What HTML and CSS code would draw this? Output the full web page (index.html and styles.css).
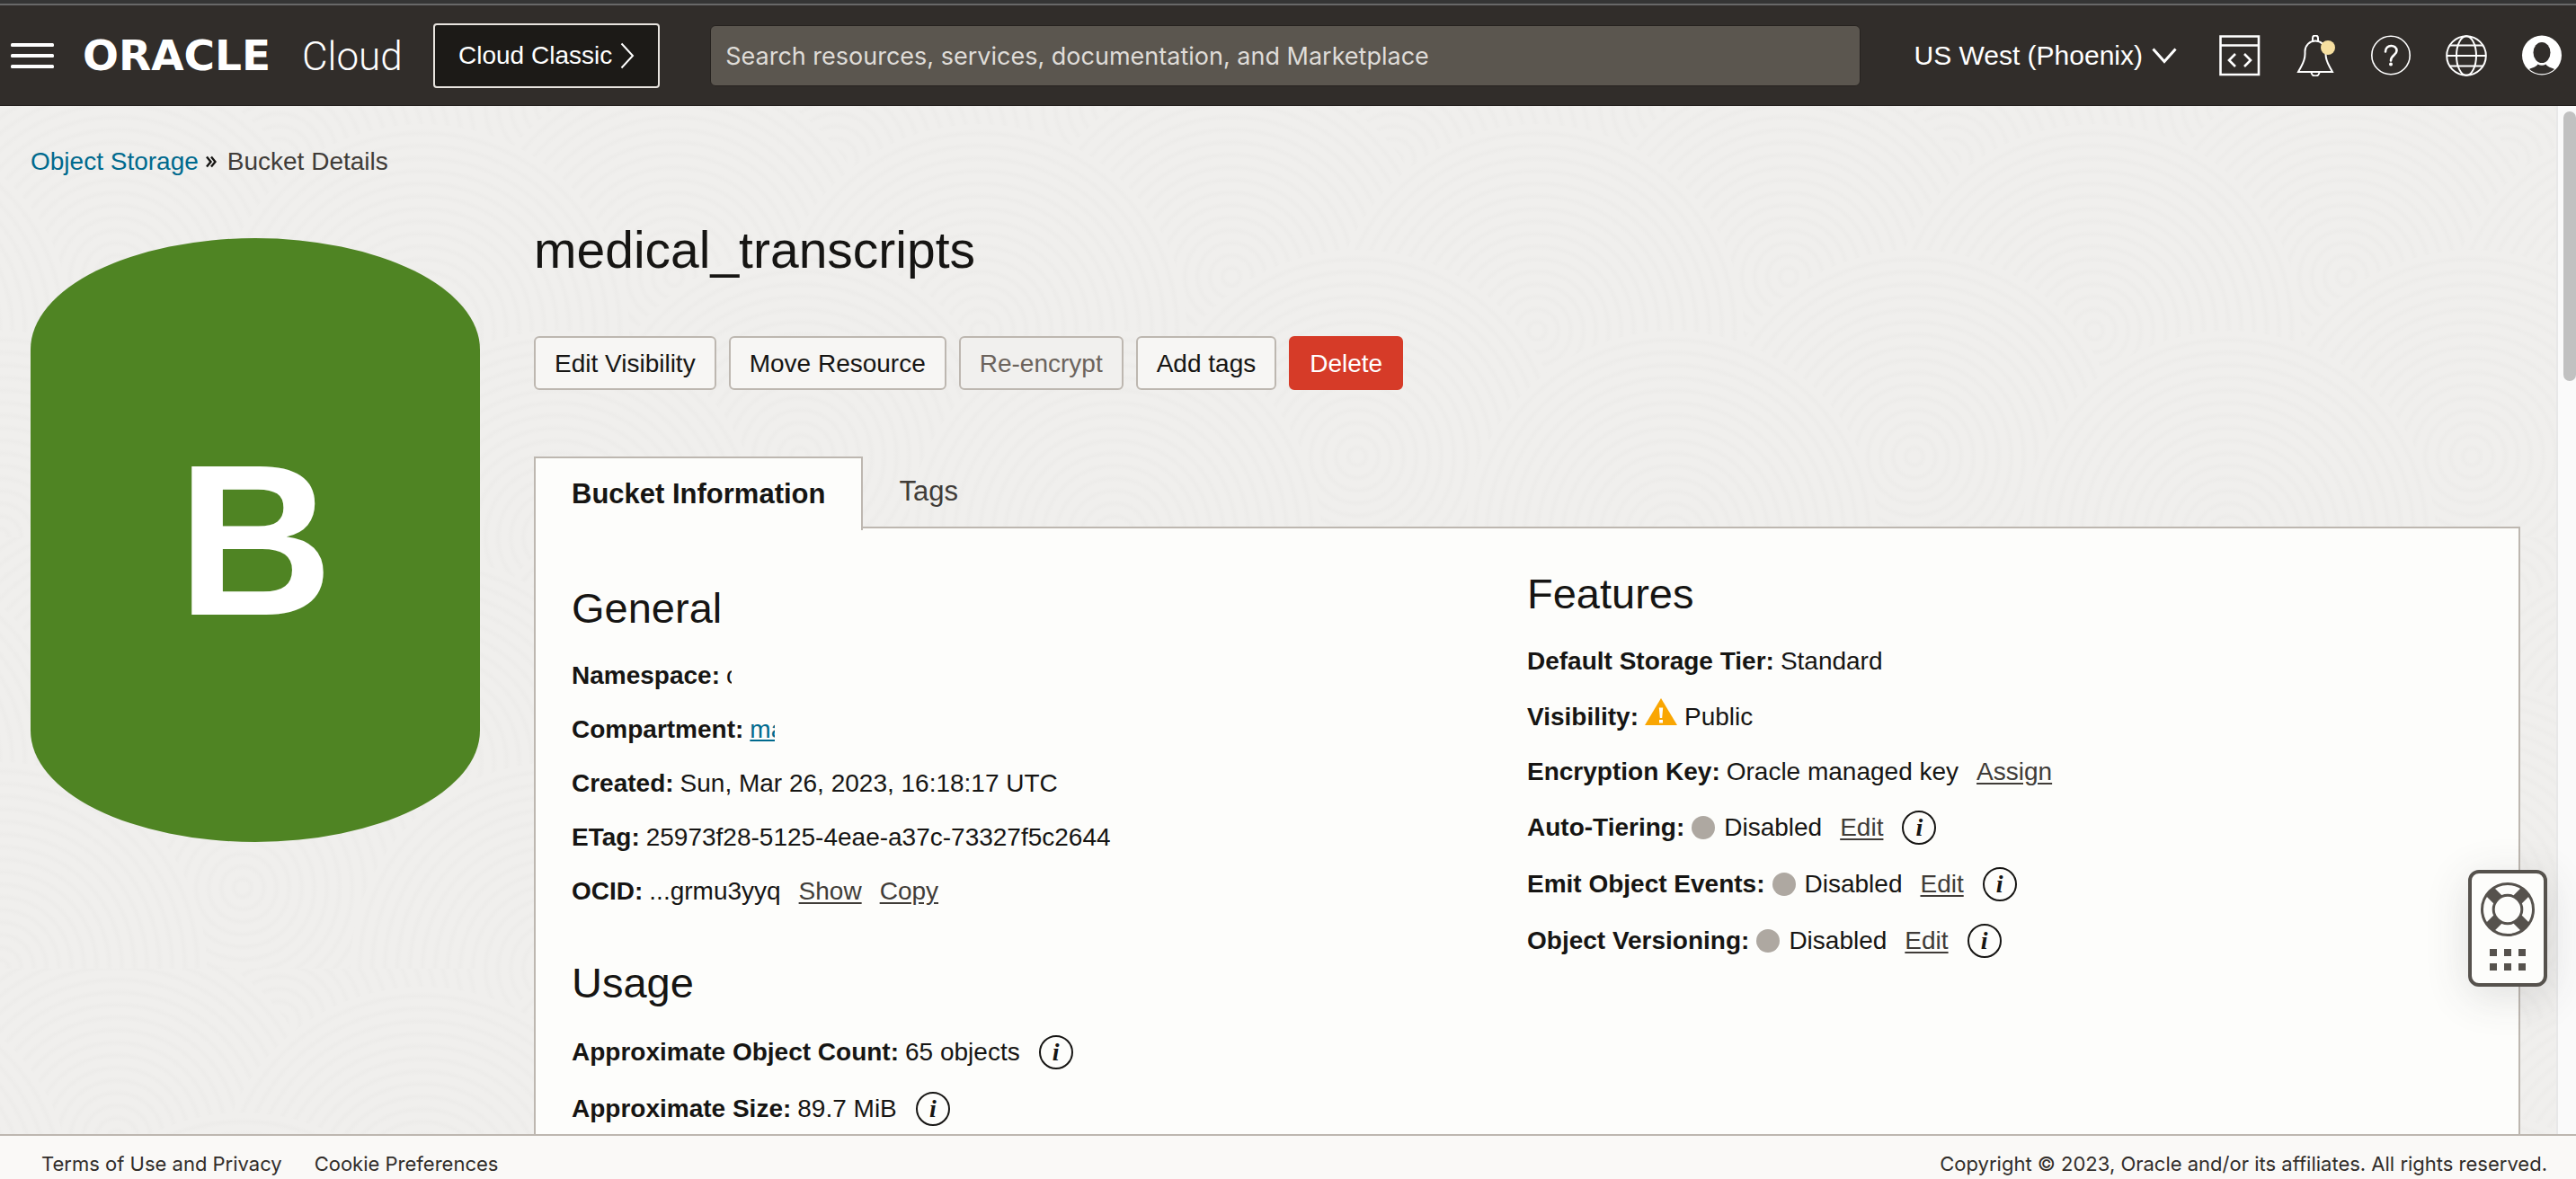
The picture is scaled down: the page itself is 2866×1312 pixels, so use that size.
FILE: index.html
```html
<!DOCTYPE html>
<html lang="en">
<head>
<meta charset="utf-8">
<meta name="viewport" content="width=device-width, initial-scale=1">
<title>Bucket Details | Oracle Cloud</title>
<link rel="stylesheet" href="styles.css">
</head>
<body>
<header class="topbar">
  <button class="icon-btn menu-btn" type="button" aria-label="Open navigation menu">
    <svg width="48" height="28" viewBox="0 0 48 28" fill="#fff"><rect width="48" height="4" rx="1.5"/><rect y="12" width="48" height="4" rx="1.5"/><rect y="24" width="48" height="4" rx="1.5"/></svg>
  </button>
  <a class="brand" href="#"><span class="brand-name">ORACLE</span><span class="brand-product">Cloud</span></a>
  <button class="classic-btn" type="button">Cloud Classic
    <svg width="16" height="30" viewBox="0 0 16 30" fill="none" stroke="#fff" stroke-width="2"><path d="M1.500 1.500 14 15 1.500 28.500"/></svg>
  </button>
  <input class="search" type="text" aria-label="Search" placeholder="Search resources, services, documentation, and Marketplace">
  <button class="region-btn" type="button">US West (Phoenix)
    <svg width="28" height="18" viewBox="0 0 28 18" fill="none" stroke="#fff" stroke-width="3"><path d="M1.500 1.500 14 15.500 26.500 1.500"/></svg>
  </button>
  <nav class="tools" aria-label="Tools">
    <button class="icon-btn" type="button" aria-label="Developer tools">
      <svg width="46" height="46" viewBox="0 0 46 46" fill="none" stroke="#fff" stroke-width="2.600"><path d="M1.500 1.500H44V44H1.500ZM1.500 11.500H44M18 21 11 28l7 7M28 21l7 7-7 7"/></svg>
    </button>
    <button class="icon-btn" type="button" aria-label="Announcements">
      <svg width="46" height="46" viewBox="0 0 46 46"><g fill="none" stroke="#fff" stroke-width="2"><path d="M20 6.500V3.500a3 3 0 0 1 6 0V6.500M4 41H42C38 33 34.500 30 34.500 21V18A11.500 11.500 0 0 0 11.500 18V21C11.500 30 8 33 4 41Z"/><path d="M18.500 41a4.500 4.500 0 0 0 9 0"/></g><circle cx="37" cy="14" r="8" fill="#f6dfa0"/></svg>
    </button>
    <button class="icon-btn" type="button" aria-label="Help">
      <svg width="46" height="46" viewBox="0 0 46 46" fill="none" stroke="#fff"><circle cx="23" cy="22.500" r="21.200" stroke-width="1.600"/><path d="M17 18.500C17 10 29.500 10 29.500 17.500C29.500 22.500 23 22 23 28.500" stroke-width="2.600" stroke-linecap="round"/><circle cx="23" cy="32.500" r="2" fill="#fff" stroke="none"/></svg>
    </button>
    <button class="icon-btn" type="button" aria-label="Language">
      <svg width="46" height="46" viewBox="0 0 46 46" fill="none" stroke="#fff" stroke-width="2"><circle cx="23" cy="23" r="21.800"/><ellipse cx="23" cy="23" rx="11" ry="21.800"/><path d="M4.500 11.500H41.500M1 23H45M4.500 34.500H41.500"/></svg>
    </button>
    <button class="icon-btn" type="button" aria-label="Profile">
      <svg width="46" height="46" viewBox="0 0 46 46"><circle cx="23" cy="22.500" r="22" fill="#fff"/><ellipse cx="23" cy="19.500" rx="9.500" ry="11.500" fill="#312d2a"/><path d="M9 38C12.500 36 17 35.500 18.500 32.500Q23 35 27.500 32.500C29 35.500 33.500 36 37 38A21 21 0 0 1 9 38Z" fill="#312d2a"/></svg>
    </button>
  </nav>
</header>

<div class="viewport">
  <main class="page">
    <nav class="breadcrumb" aria-label="Breadcrumb">
      <a href="#">Object Storage</a>
      <svg width="12" height="14" viewBox="0 0 12 14" fill="none" stroke="#161513" stroke-width="2.400" aria-hidden="true"><path d="M1 1.500 5.500 7 1 12.500M6 1.500 10.500 7 6 12.500"/></svg>
      <span>Bucket Details</span>
    </nav>

    <div class="layout">
      <div class="bucket" aria-hidden="true">B</div>
      <section class="details">
        <h1>medical_transcripts</h1>
        <div class="actions">
          <button class="btn" type="button">Edit Visibility</button>
          <button class="btn" type="button">Move Resource</button>
          <button class="btn" type="button" disabled>Re-encrypt</button>
          <button class="btn" type="button">Add tags</button>
          <button class="btn btn-danger" type="button">Delete</button>
        </div>
        <div class="tabs" role="tablist">
          <button class="tab tab-active" type="button" role="tab" aria-selected="true">Bucket Information</button>
          <button class="tab" type="button" role="tab" aria-selected="false">Tags</button>
        </div>
        <div class="panel" role="tabpanel">
          <div class="col col-left">
            <h2>General</h2>
            <dl>
              <div class="row"><dt>Namespace:</dt><dd><span class="cut cut-ns">o</span></dd></div>
              <div class="row"><dt>Compartment:</dt><dd><a class="cut cut-comp" href="#">ma</a></dd></div>
              <div class="row"><dt>Created:</dt><dd>Sun, Mar 26, 2023, 16:18:17 UTC</dd></div>
              <div class="row"><dt>ETag:</dt><dd>25973f28-5125-4eae-a37c-73327f5c2644</dd></div>
              <div class="row"><dt>OCID:</dt><dd>...grmu3yyq <a class="action" href="#">Show</a> <a class="action" href="#">Copy</a></dd></div>
            </dl>
            <h2 class="h-next">Usage</h2>
            <dl>
              <div class="row row-info"><dt>Approximate Object Count:</dt><dd>65 objects <button class="info" type="button" aria-label="About object count">i</button></dd></div>
              <div class="row row-info"><dt>Approximate Size:</dt><dd>89.7 MiB <button class="info" type="button" aria-label="About size">i</button></dd></div>
            </dl>
          </div>
          <div class="col">
            <h2>Features</h2>
            <dl>
              <div class="row"><dt>Default Storage Tier:</dt><dd>Standard</dd></div>
              <div class="row row-info"><dt>Visibility:</dt><dd><svg class="warn" width="36" height="30" viewBox="0 0 36 30" aria-hidden="true"><path d="M18 0 36 30H0Z" fill="#f9a602"/><path d="M15.800 10.500H20.200L19.200 22H16.800ZM16 24H20V27.500H16Z" fill="#fff"/></svg>Public</dd></div>
              <div class="row"><dt>Encryption Key:</dt><dd>Oracle managed key <a class="action" href="#">Assign</a></dd></div>
              <div class="row row-info"><dt>Auto-Tiering:</dt><dd><span class="dot"></span>Disabled <a class="action" href="#">Edit</a> <button class="info" type="button" aria-label="About auto-tiering">i</button></dd></div>
              <div class="row row-info"><dt>Emit Object Events:</dt><dd><span class="dot"></span>Disabled <a class="action" href="#">Edit</a> <button class="info" type="button" aria-label="About object events">i</button></dd></div>
              <div class="row row-info"><dt>Object Versioning:</dt><dd><span class="dot"></span>Disabled <a class="action" href="#">Edit</a> <button class="info" type="button" aria-label="About object versioning">i</button></dd></div>
            </dl>
          </div>
        </div>
      </section>
    </div>
  </main>
  <div class="scrollbar" aria-hidden="true"><div class="thumb"></div></div>
</div>

<footer class="footer">
  <a href="#">Terms of Use and Privacy</a>
  <a href="#">Cookie Preferences</a>
  <span class="copyright">Copyright © 2023, Oracle and/or its affiliates. All rights reserved.</span>
</footer>

<button class="help-widget" type="button" aria-label="Support">
  <svg width="60" height="60" viewBox="0 0 60 60" fill="none" stroke="#56524d"><path d="M10 10 19 19M41 41l9 9M50 10l-9 9M19 41l-9 9" stroke-width="13"/><circle cx="30" cy="30" r="28.500" stroke-width="3"/><circle cx="30" cy="30" r="15.800" stroke-width="3"/></svg>
  <svg width="40" height="24" viewBox="0 0 40 24" fill="#56524d"><path d="M0 0h8v8H0ZM16 0h8v8h-8ZM32 0h8v8h-8ZM0 16h8v8H0ZM16 16h8v8h-8ZM32 16h8v8h-8Z"/></svg>
</button>
</body>
</html>
```
FILE: styles.css
```css
* { box-sizing: border-box; }

body {
  margin: 0;
  height: 100vh;
  display: flex;
  flex-direction: column;
  overflow: hidden;
  position: relative;
  font: 28px/40px "Liberation Sans", Arial, sans-serif;
  color: #161513;
  background: #f1efed;
}

button, input { font: inherit; color: inherit; }
button { cursor: pointer; }
svg { display: block; flex: none; }

/* Header */
.topbar {
  flex: none;
  display: flex;
  align-items: center;
  height: 118px;
  padding: 6px 15px 0 12px;
  background: linear-gradient(#353535 0 4px, #686868 4px 6px, #312d2a 6px);
  border-bottom: 1px solid #231f1d;
  color: #fff;
}
.icon-btn { padding: 0; border: 0; background: none; }
.brand {
  display: flex;
  align-items: baseline;
  margin-left: 32px;
  padding-top: 2px;
  width: 356px;
  color: #fff;
  text-decoration: none;
  line-height: 56px;
}
.brand-name { width: 244px; font: 700 47px/56px "DejaVu Sans", sans-serif; }
.brand-product { font: 300 44px/56px Roboto, sans-serif; }
.classic-btn {
  display: flex;
  align-items: center;
  gap: 9px;
  height: 72px;
  margin-left: 34px;
  padding: 0 26px;
  border: 2px solid #e8e4df;
  border-radius: 4px;
  background: #1c1a17;
  white-space: nowrap;
}
.search {
  flex: 1;
  min-width: 0;
  height: 68px;
  margin: 0 59px 0 56px;
  padding: 2px 16px 0;
  border: 1px solid #26221f;
  border-radius: 6px;
  background: #5b564f;
  font: 27px/40px Inter, sans-serif;
}
.search::placeholder { color: #dfdcd8; opacity: 1; }
.region-btn {
  display: flex;
  align-items: center;
  gap: 10px;
  padding: 0;
  border: 0;
  background: none;
  font-size: 30px;
  white-space: nowrap;
}
.tools { display: flex; gap: 38px; margin-left: 47px; }

/* Page body */
.viewport { flex: 1; min-height: 0; display: flex; }
.page {
  flex: 1;
  min-width: 0;
  overflow: hidden;
  padding: 42px 40px 0 34px;
  background: #f1efed url("data:image/svg+xml,%3Csvg xmlns='http://www.w3.org/2000/svg' width='620' height='480'%3E%3Cdefs%3E%3CradialGradient id='g' gradientUnits='userSpaceOnUse' cx='0' cy='0' r='14' spreadMethod='repeat'%3E%3Cstop offset='0' stop-color='%23f0efed'/%3E%3Cstop offset='.4' stop-color='%23f0efed'/%3E%3Cstop offset='.7' stop-color='%23edecea'/%3E%3Cstop offset='1' stop-color='%23f0efed'/%3E%3C/radialGradient%3E%3Cellipse id='c' rx='230' ry='230' fill='url(%23g)'/%3E%3C/defs%3E%3Cuse href='%23c' x='0' y='0'/%3E%3Cuse href='%23c' x='620' y='0'/%3E%3Cuse href='%23c' x='310' y='60'/%3E%3Cuse href='%23c' x='130' y='190'/%3E%3Cuse href='%23c' x='750' y='190'/%3E%3Cuse href='%23c' x='470' y='250'/%3E%3Cuse href='%23c' x='-150' y='250'/%3E%3Cuse href='%23c' x='270' y='390'/%3E%3Cuse href='%23c' x='0' y='480'/%3E%3Cuse href='%23c' x='620' y='480'/%3E%3C/svg%3E");
}
.breadcrumb { display: flex; align-items: center; gap: 8px; color: #403c38; }
.breadcrumb a { color: #006a8e; text-decoration: none; }
.breadcrumb span { margin-left: 4px; }

.layout { display: flex; align-items: flex-start; gap: 60px; margin-top: 39px; }
.bucket {
  flex: none;
  display: flex;
  align-items: center;
  justify-content: center;
  width: 500px;
  height: 672px;
  margin-top: 26px;
  border-radius: 250px / 124px;
  background: #4f8423;
  color: #fff;
  font-size: 240px;
  font-weight: 700;
}
.details { flex: 1; min-width: 0; }
h1, h2, dl, dd { margin: 0; }
h1 { padding-top: 3px; font-size: 57px; font-weight: 400; line-height: 72px; }
.actions { display: flex; gap: 14px; margin-top: 60px; }
.btn {
  height: 60px;
  padding: 2px 21px 0;
  border: 2px solid #bdb7b0;
  border-radius: 6px;
  background: #f7f6f4;
}
.btn:disabled { background: #f1f0ee; color: #6b635c; }
.btn-danger { border-color: #d63b28; background: #d63b28; color: #fff; }

.tabs { display: flex; margin-top: 74px; }
.tab {
  height: 80px;
  padding: 0 38px 2px;
  border: 2px solid transparent;
  background: none;
  color: #403c38;
  font-size: 31px;
}
.tab-active {
  position: relative;
  z-index: 1;
  margin-bottom: -2px;
  padding: 0 40px;
  height: 82px;
  border-color: #bdb7b0;
  border-bottom: 0;
  background: #fdfdfb;
  color: #161513;
  font-weight: 700;
}
.panel {
  display: grid;
  grid-template-columns: 1fr 1fr;
  margin-top: -2px;
  padding: 43px 40px;
  border: 2px solid #bdb7b0;
  background: #fdfdfb;
}
.col-left { padding-top: 16px; }
h2 { margin-bottom: 15px; font-size: 47px; font-weight: 400; line-height: 60px; }
.h-next { margin-top: 42px; }
.row { display: flex; align-items: center; gap: 7px; height: 60px; }
.row-info { height: 63px; }
dt { font-weight: 700; white-space: nowrap; }
dd { display: flex; align-items: center; white-space: nowrap; }
.action { margin-left: 20px; color: #403c38; text-underline-offset: 3px; }
.cut { display: block; overflow: hidden; }
.cut-ns { width: 6px; }
.cut-comp { width: 28px; color: #006a8e; }
.warn { margin: 0 8px 12px 0; }
.dot { width: 26px; height: 26px; margin: 0 10px 0 1px; border-radius: 50%; background: #aea8a1; }
.info {
  width: 38px;
  height: 38px;
  margin-left: 21px;
  padding: 0;
  border: 2px solid #161513;
  border-radius: 50%;
  background: none;
  font: italic 700 28px/32px "Liberation Serif", serif;
}

.scrollbar {
  flex: none;
  width: 22px;
  padding: 6px 0 0 6px;
  border-left: 2px solid #e8e8e8;
  background: #fafafa;
}
.thumb { height: 300px; border-radius: 8px; background: #c1c1c1; }

/* Footer */
.footer {
  flex: none;
  display: flex;
  align-items: center;
  gap: 36px;
  height: 50px;
  padding: 14px 32px 0 46px;
  border-top: 2px solid #bdb7b0;
  background: #faf9f7;
  color: #312d2a;
  font: 22px/30px Inter, sans-serif;
}
.footer a { color: inherit; text-decoration: none; }
.copyright { margin-left: auto; }

.help-widget {
  position: absolute;
  right: 32px;
  bottom: 214px;
  display: flex;
  flex-direction: column;
  align-items: center;
  gap: 14px;
  width: 88px;
  height: 130px;
  padding: 10px 0 0;
  border: 4px solid #56524d;
  border-radius: 12px;
  background: #fdfdfb;
  box-shadow: 0 10px 48px rgba(60, 60, 70, .16);
}
```
